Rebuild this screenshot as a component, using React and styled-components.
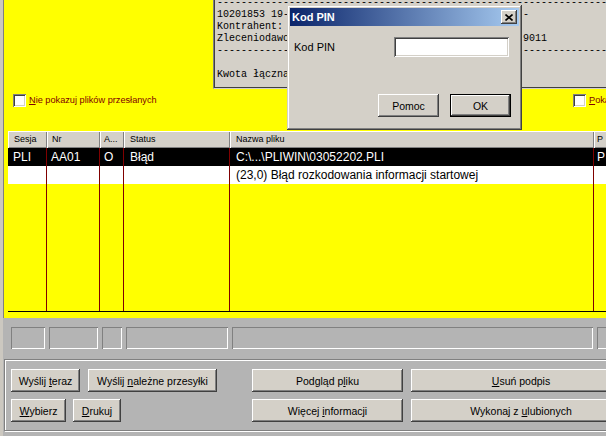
import React from 'react';
import styled, { createGlobalStyle } from 'styled-components';

const GlobalStyle = createGlobalStyle`
  html, body { margin: 0; padding: 0; }
  body {
    width: 606px;
    height: 436px;
    overflow: hidden;
    background: #b4b4b4;
    font-family: "Liberation Sans", Arial, sans-serif;
  }
`;

const Screen = styled.div`
  position: relative;
  width: 606px;
  height: 436px;
  overflow: hidden;
  box-sizing: border-box;
  border-left: 3px solid #ccc8c0;
  background: #b4b4b4;
  display: flex;
  flex-direction: column;
`;

// yellow work area: receipt preview, options and file list
const Workspace = styled.div`
  flex: none;
  height: 318px;
  background: #ffff00;
  border-left: 1px solid #808080;
  display: flex;
  flex-direction: column;
`;

const TopRow = styled.div`
  flex: none;
  height: 89px;
  display: flex;
`;

const Receipt = styled.div`
  flex: none;
  width: 440px;
  margin-left: 209px;
  box-sizing: border-box;
  background: #d4d0c8;
  border-left: 1px solid #808080;
  border-bottom: 1px solid #d4d0c8;
  box-shadow: inset 1px 0 #404040, inset 0 -1px #404040;
  padding-left: 3px;
  overflow: hidden;
`;

const ReceiptText = styled.div`
  margin-top: -3px;
  font-family: "Liberation Mono", "Courier New", monospace;
  font-size: 10px;
  line-height: 12px;
  color: #000;
  white-space: pre;
`;

const ReceiptLine = styled.div`
  height: 12px;
`;

const OptionsRow = styled.div`
  flex: none;
  margin-top: 5px;
  height: 13px;
  padding-left: 9px;
  display: grid;
  grid-template-columns: 560px 1fr;
`;

const Option = styled.label`
  display: flex;
  align-items: center;
  gap: 3px;
  white-space: nowrap;
  font-size: 9.2px;
  line-height: 13px;
  color: #800000;
`;

const CheckBox = styled.span`
  flex: none;
  width: 13px;
  height: 13px;
  box-sizing: border-box;
  background: #fff;
  box-shadow: inset 1px 1px #808080, inset -1px -1px #fff, inset 2px 2px #404040, inset -2px -2px #d4d0c8;
`;

const COLS = '39px 53px 24px 106px 364px 1fr';

const Table = styled.div`
  flex: none;
  margin: 24px 0 0 4px;
  width: 640px;
`;

const HeaderRow = styled.div`
  display: grid;
  grid-template-columns: ${COLS};
  height: 17px;
`;

const HeaderCell = styled.div`
  box-sizing: border-box;
  background: #d4d0c8;
  box-shadow: inset 1px 1px #fff, inset -1px -1px #808080;
  padding-left: ${p => p.$pad ?? 6}px;
  font-size: 9px;
  line-height: 17px;
  color: #000;
  white-space: nowrap;
  overflow: hidden;
`;

const Body = styled.div`
  display: grid;
  grid-template-columns: ${COLS};
  grid-template-rows: 18px 18px 1fr;
  height: 164px;
  box-sizing: border-box;
  border-bottom: 1px solid #000;
`;

const toneBg = { selected: '#000', plain: '#fff', empty: 'transparent' };

const BodyCell = styled.div`
  box-sizing: border-box;
  background: ${p => toneBg[p.$tone]};
  color: ${p => (p.$tone === 'selected' ? '#fff' : '#000')};
  border-right: ${p => (p.$last ? 'none' : '1px solid #800000')};
  padding-left: ${p => p.$pad ?? 5}px;
  font-size: 12px;
  line-height: 18px;
  white-space: nowrap;
  overflow: hidden;
`;

const StatusBar = styled.div`
  flex: none;
  margin-top: 9px;
  height: 22px;
  padding-left: 8px;
  display: flex;
  gap: 4px;
`;

const StatusPanel = styled.div`
  flex: none;
  width: ${p => p.$w}px;
  box-shadow: inset 1px 1px #808080, inset -1px -1px #fff;
`;

const GroupBox = styled.div`
  flex: none;
  margin: 10px 0 0 1px;
  width: 660px;
  height: 72px;
  box-sizing: border-box;
  border: 1px solid #808080;
  box-shadow: inset 1px 1px #fff, 1px 1px 0 #fff;
  padding: 9px 0 0 6px;
  display: flex;
`;

const Column = styled.div`
  flex: none;
  width: ${p => p.$w}px;
  margin-left: ${p => p.$ml || 0}px;
  display: flex;
  flex-direction: column;
  gap: 7px;
`;

const ButtonRow = styled.div`
  display: flex;
  gap: ${p => p.$gap}px;
`;

const WinButton = styled.button`
  flex: none;
  width: ${p => (p.$w ? `${p.$w}px` : '100%')};
  height: 23px;
  padding: 0;
  box-sizing: border-box;
  border: ${p => (p.$default ? '1px solid #000' : 'none')};
  background: #d4d0c8;
  box-shadow: inset -1px -1px #404040, inset 1px 1px #fff, inset -2px -2px #808080;
  font-family: "Liberation Sans", Arial, sans-serif;
  font-size: 10.5px;
  color: #000;
  text-align: center;
  white-space: nowrap;
`;

// modal PIN dialog lying over the window
const Dialog = styled.div`
  position: absolute;
  left: 284px;
  top: 5px;
  width: 235px;
  height: 125px;
  box-sizing: border-box;
  padding: 3px;
  background: #d4d0c8;
  box-shadow: inset -1px -1px #404040, inset 1px 1px #d4d0c8, inset -2px -2px #808080, inset 2px 2px #fff;
  z-index: 2;
`;

const TitleBar = styled.div`
  height: 18px;
  padding: 0 2px;
  display: flex;
  align-items: center;
  justify-content: space-between;
  background: linear-gradient(to right, #0a246a, #a6caf0);
`;

const Title = styled.span`
  font-size: 11px;
  font-weight: bold;
  color: #fff;
`;

const CloseButton = styled.span`
  width: 16px;
  height: 14px;
  display: flex;
  align-items: center;
  justify-content: center;
  background: #d4d0c8;
  box-shadow: inset -1px -1px #404040, inset 1px 1px #fff, inset -2px -2px #808080;
`;

const FieldRow = styled.div`
  margin-top: 11px;
  padding-left: 4px;
  display: flex;
  align-items: center;
`;

const FieldLabel = styled.span`
  flex: none;
  width: 100px;
  font-size: 11px;
  color: #000;
`;

const PinInput = styled.div`
  width: 115px;
  height: 20px;
  background: #fff;
  box-shadow: inset 1px 1px #808080, inset -1px -1px #fff, inset 2px 2px #404040, inset -2px -2px #d4d0c8;
`;

const ActionRow = styled.div`
  margin-top: 37px;
  padding-right: 8px;
  display: flex;
  justify-content: flex-end;
  gap: 11px;
`;

const dash = '-'.repeat(72);
const receipt = [
  dash,
  '10201853 19-'.padEnd(51) + '-',
  'Kontrahent:',
  'Zleceniodawca:'.padEnd(50) + ':9011',
  dash,
  '',
  'Kwota łączna:',
];

const headers = [
  { t: 'Sesja' },
  { t: 'Nr', pad: 5 },
  { t: 'A...', pad: 4 },
  { t: 'Status' },
  { t: 'Nazwa pliku' },
  { t: 'P', pad: 3 },
];

const rows = [
  { tone: 'selected', cells: ['PLI', 'AA01', 'O', 'Błąd', 'C:\\...\\PLIWIN\\03052202.PLI', 'P'] },
  { tone: 'plain', cells: ['', '', '', '', '(23,0) Błąd rozkodowania informacji startowej', ''] },
  { tone: 'empty', cells: ['', '', '', '', '', ''] },
];

const pads = [5, 4, 4, 6, 6, 3];

export default function App() {
  return (
    <>
      <GlobalStyle />
      <Screen>
        <Workspace>
          <TopRow>
            <Receipt>
              <ReceiptText>
                {receipt.map((line, i) => (
                  <ReceiptLine key={i}>{line}</ReceiptLine>
                ))}
              </ReceiptText>
            </Receipt>
          </TopRow>

          <OptionsRow>
            <Option>
              <CheckBox />
              <span><u>N</u>ie pokazuj plików przesłanych</span>
            </Option>
            <Option>
              <CheckBox />
              <span><u>P</u>okaż pliki przesłane</span>
            </Option>
          </OptionsRow>

          <Table>
            <HeaderRow>
              {headers.map(h => (
                <HeaderCell key={h.t} $pad={h.pad}>{h.t}</HeaderCell>
              ))}
            </HeaderRow>
            <Body>
              {rows.map((r, ri) =>
                r.cells.map((c, ci) => (
                  <BodyCell key={`${ri}-${ci}`} $tone={r.tone} $pad={pads[ci]} $last={ci === 5}>
                    {c}
                  </BodyCell>
                ))
              )}
            </Body>
          </Table>
        </Workspace>

        <StatusBar>
          {[34, 49, 20, 102, 361, 60].map((w, i) => (
            <StatusPanel key={i} $w={w} />
          ))}
        </StatusBar>

        <GroupBox>
          <Column $w={241}>
            <ButtonRow $gap={8}>
              <WinButton $w={69}>Wyślij <u>t</u>eraz</WinButton>
              <WinButton $w={129}>Wyślij <u>n</u>ależne przesyłki</WinButton>
            </ButtonRow>
            <ButtonRow $gap={7}>
              <WinButton $w={55}><u>W</u>ybierz</WinButton>
              <WinButton $w={48}><u>D</u>rukuj</WinButton>
            </ButtonRow>
          </Column>
          <Column $w={151}>
            <WinButton>Podgląd p<u>l</u>iku</WinButton>
            <WinButton>Więcej <u>i</u>nformacji</WinButton>
          </Column>
          <Column $w={220} $ml={8}>
            <WinButton><u>U</u>suń podpis</WinButton>
            <WinButton>Wykonaj z <u>u</u>lubionych</WinButton>
          </Column>
        </GroupBox>

        <Dialog>
          <TitleBar>
            <Title>Kod PIN</Title>
            <CloseButton>
              <svg width="8" height="7" viewBox="0 0 8 7">
                <path d="M0.5 0.5 L7.5 6.5 M7.5 0.5 L0.5 6.5" stroke="#000" strokeWidth="1.6" />
              </svg>
            </CloseButton>
          </TitleBar>
          <FieldRow>
            <FieldLabel>Kod PIN</FieldLabel>
            <PinInput />
          </FieldRow>
          <ActionRow>
            <WinButton $w={61}>Pomoc</WinButton>
            <WinButton $w={61} $default>OK</WinButton>
          </ActionRow>
        </Dialog>
      </Screen>
    </>
  );
}
